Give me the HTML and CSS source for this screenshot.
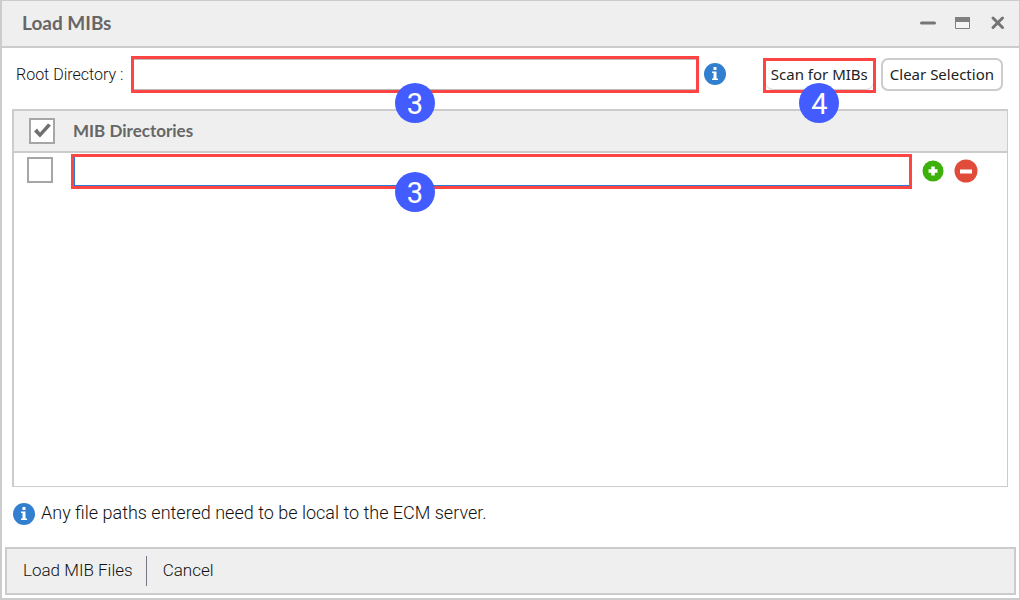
FILE: index.html
```html
<!doctype html>
<html lang="en">
<head>
  <meta charset="utf-8">
  <title>Load MIBs</title>
  <meta name="viewport" content="width=device-width, initial-scale=1">
  <link rel="stylesheet" href="styles.css">
</head>

<body>

  <form class="window" id="load-mibs">
    <header class="titlebar">
      <h1>Load MIBs</h1>
      <button type="button" class="icon-button" aria-label="Minimize">
        <svg width="16" height="16" viewBox="0 0 16 16"><path d="M1.5 8h13" stroke="#757575" stroke-width="3" stroke-linecap="round"/></svg>
      </button>
      <button type="button" class="icon-button" aria-label="Maximize">
        <svg width="16" height="16" viewBox="0 0 16 16"><path d="M.5 2.500h14v11H.5z" fill="#f4f4f4" stroke="#808080"/><path d="M0 2h15v5H0z" fill="#808080"/></svg>
      </button>
      <button type="button" class="icon-button" aria-label="Close">
        <svg width="16" height="16" viewBox="0 0 16 16"><path d="M3 3l9.500 9.500M12.500 3L3 12.500" stroke="#757575" stroke-width="3" stroke-linecap="round"/></svg>
      </button>
    </header>

    <div class="toolbar">
      <label for="root-directory">Root Directory :</label>
      <div class="callout root-field">
        <input type="text" id="root-directory" name="root-directory">
        <span class="step">3</span>
      </div>
      <svg class="info" width="22" height="22" viewBox="0 0 22 22"><circle cx="11" cy="11" r="11" fill="#327fd0"/><path d="M9.500 4h3v3h-3zM8 8.500h4.500v7H14V17H8v-1.500h1.500V10H8z" fill="#fff"/></svg>
      <div class="callout scan">
        <button type="button" class="button">Scan for MIBs</button>
        <span class="step">4</span>
      </div>
      <button type="reset" class="button">Clear Selection</button>
    </div>

    <div class="panel">
      <table class="directories">
        <thead>
          <tr>
            <th class="check"><input type="checkbox" id="select-all" aria-label="Select all directories" checked></th>
            <th class="path">MIB Directories</th>
            <th class="actions"></th>
          </tr>
        </thead>
        <tbody>
          <tr>
            <td class="check"><input type="checkbox" aria-label="Select directory"></td>
            <td class="path">
              <div class="callout">
                <input type="text" name="mib-directory" aria-label="MIB directory">
                <span class="step">3</span>
              </div>
            </td>
            <td class="actions">
              <div class="action-list">
                <button type="button" class="icon-button" aria-label="Add directory">
                  <svg width="22" height="22" viewBox="0 0 22 22"><circle cx="11" cy="11" r="10.500" fill="#3bb10a"/><path d="M11 6.500v9M6.500 11h9" stroke="#fff" stroke-width="3.500"/></svg>
                </button>
                <button type="button" class="icon-button" aria-label="Remove directory">
                  <svg width="24" height="24" viewBox="0 0 24 24"><circle cx="12" cy="12" r="11.500" fill="#e04b3a"/><path d="M6 12.500h12" stroke="#fff" stroke-width="4"/></svg>
                </button>
              </div>
            </td>
          </tr>
        </tbody>
      </table>
    </div>

    <p class="note">
      <svg class="info" width="22" height="22" viewBox="0 0 22 22"><circle cx="11" cy="11" r="11" fill="#327fd0"/><path d="M9.500 4h3v3h-3zM8 8.500h4.500v7H14V17H8v-1.500h1.500V10H8z" fill="#fff"/></svg>
      <span>Any file paths entered need to be local to the ECM server.</span>
    </p>

    <footer class="actions-bar">
      <button type="submit">Load MIB Files</button>
      <button type="button">Cancel</button>
    </footer>
  </form>

</body>
</html>
```
FILE: styles.css
```css
* {
  box-sizing:border-box;
}
body {
  margin:0;
  font-family:Roboto, 'Liberation Sans', sans-serif;
  font-weight:300;
  color:#111;
}
button {
  margin:0;
  padding:0;
  border:0;
  background:none;
  font:inherit;
  color:inherit;
  cursor:pointer;
}
svg {
  display:block;
  flex:none;
}
.window {
  display:flex;
  flex-direction:column;
  min-height:100vh;
  background:#fff;
  border:solid #ccc;
  border-width:1px 1px 2px 2px;
}
.titlebar {
  display:flex;
  align-items:center;
  gap:19px;
  height:47px;
  padding:0 13px 2px 20px;
  background:#efefef;
  border-bottom:2px solid #ccc;
}
.titlebar h1 {
  flex:1;
  margin:0;
  font:bold 19px Lato, 'Open Sans', sans-serif;
  color:#666;
}

/* toolbar */
.toolbar {
  display:flex;
  align-items:flex-start;
  padding:8px 16px 16px 14px;
}
.toolbar label {
  width:115px;
  font-size:16px;
  line-height:37px;
}
.toolbar .info {
  margin:7px 37px 0 5px;
}
.toolbar > .button {
  margin:2px 0 0 5px;
}
.callout {
  position:relative;
  border:3px solid #ff4444;
}
.callout input {
  display:block;
  width:100%;
  padding:0 8px;
  font:300 16px Roboto, sans-serif;
  outline:0;
}
.step {
  position:absolute;
  top:24px;
  left:50%;
  z-index:1;
  width:40px;
  height:40px;
  margin-left:-20px;
  border-radius:50%;
  background:#435cff;
  font-size:29px;
  font-weight:400;
  line-height:42px;
  text-align:center;
  color:#fff;
}
.root-field {
  flex:1;
}
.root-field input {
  height:31px;
  border:solid #bbb;
  border-width:1px 0;
}
.button {
  height:33px;
  padding:0 7px 2px;
  background:#fff;
  border:2px solid #ccc;
  border-radius:7px;
  font:15px 'Noto Sans', sans-serif;
  color:#222;
  white-space:nowrap;
}
.scan {
  margin-top:2px;
}
.scan .button {
  display:block;
  height:29px;
  padding:0 5px 2px;
  border-width:0 0 1px;
}
.scan .step {
  top:22px;
}

/* directory list */
.panel {
  flex:1;
  margin:0 11px 0 10px;
  border:solid #ccc;
  border-width:2px 1px 1px 2px;
}
.directories {
  width:100%;
  border-collapse:collapse;
  table-layout:fixed;
}
.directories th {
  height:41px;
  padding:0 0 1px;
  background:#efefef;
  border-bottom:2px solid #ccc;
  font:bold 17px Lato, 'Open Sans', sans-serif;
  text-align:left;
  color:#666;
}
.directories td {
  padding:1px 0;
}
.directories .check {
  width:57px;
  padding-left:13px;
}
.directories td.check {
  padding-top:4px;
  vertical-align:top;
}
.directories th.check {
  padding-left:15px;
}
.directories th.path {
  padding-left:2px;
}
.directories .actions {
  width:95px;
}
input[type=checkbox] {
  -webkit-appearance:none;
  appearance:none;
  display:block;
  width:26px;
  height:26px;
  margin:0;
  background:#fff;
  border:2px solid #a6a6a6;
}
input[type=checkbox]:checked::before {
  content:'';
  display:block;
  width:22px;
  height:22px;
  background:#707070;
  clip-path:polygon(3px 12px, 6px 9px, 9px 13px, 17px 4px, 20px 6px, 9px 18px);
}
.directories .callout input {
  height:29px;
  border:solid #2a7bd0;
  border-width:0 0 1px 1px;
}
.directories .callout .step {
  top:15px;
  left:341px;
}
.action-list {
  display:flex;
  align-items:center;
  gap:10px;
  padding:0 0 2px 10px;
}

.note {
  display:flex;
  align-items:center;
  gap:6px;
  margin:16px 11px 22px;
  font-size:18px;
  line-height:20px;
}
.note span {
  padding-bottom:2px;
}
.actions-bar {
  display:flex;
  align-items:center;
  height:48px;
  margin:0 3px 3px;
  background:#efefef;
  border:2px solid #ccc;
}
.actions-bar button {
  height:30px;
  padding:0 13px 2px 16px;
  font-size:17px;
}
.actions-bar button + button {
  border-left:1px solid #778;
}
```
